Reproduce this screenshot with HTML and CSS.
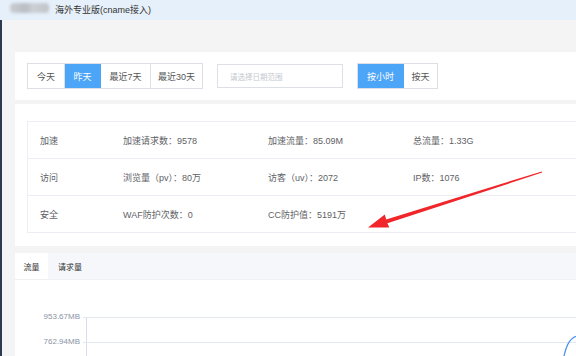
FILE: index.html
```html
<!DOCTYPE html>
<html lang="zh">
<head>
<meta charset="utf-8">
<link rel="stylesheet" href="styles.css">
</head>
<body>
<div class="topbar">
  <span class="blur"></span>
  <span class="title">海外专业版(cname接入)</span>
</div>
<div class="main">
  <div class="edge"></div>
  <div class="content">
    <div class="card filters">
      <div class="btn-group">
        <span class="btn w36">今天</span>
        <span class="btn w36 active">昨天</span>
        <span class="btn w50">最近7天</span>
        <span class="btn w52">最近30天</span>
      </div>
      <div class="date-input">请选择日期范围</div>
      <div class="btn-group">
        <span class="btn w45 active">按小时</span>
        <span class="btn w34">按天</span>
      </div>
    </div>

    <div class="card stats">
      <div class="table">
        <div class="row">
          <span class="cell label">加速</span>
          <span class="cell">加速请求数：9578</span>
          <span class="cell">加速流量：85.09M</span>
          <span class="cell">总流量：1.33G</span>
        </div>
        <div class="row">
          <span class="cell label">访问</span>
          <span class="cell">浏览量（pv）：80万</span>
          <span class="cell">访客（uv）：2072</span>
          <span class="cell">IP数：1076</span>
        </div>
        <div class="row">
          <span class="cell label">安全</span>
          <span class="cell">WAF防护次数：0</span>
          <span class="cell">CC防护值：5191万</span>
          <span class="cell"></span>
        </div>
      </div>
    </div>

    <div class="card chart-card">
      <div class="tabs">
        <span class="tab active">流量</span>
        <span class="tab">请求量</span>
      </div>
      <div class="chart">
        <div class="yrow">
          <span class="ylabel">953.67MB</span>
          <div class="yline"><div class="yplot"></div></div>
        </div>
        <div class="yrow">
          <span class="ylabel">762.94MB</span>
          <div class="yline"><div class="yplot"></div></div>
        </div>
        <svg class="curve" width="14" height="23" viewBox="0 0 14 23">
          <path d="M0.5 23 C 3 12, 6 3, 14 1" fill="none" stroke="#4a8ef0" stroke-width="1.2"/>
        </svg>
      </div>
    </div>
  </div>
</div>
<svg class="arrow" width="576" height="356" viewBox="0 0 576 356">
  <polygon points="542.2,172.6 387.4,223.2 389.3,227.6 368,227.5 384.8,214.6 386.2,219.4 541.8,171.4" fill="#f0262a"/>
</svg>
</body>
</html>
```

FILE: styles.css
```css
html, body {
  margin: 0;
  padding: 0;
}
body {
  width: 576px;
  height: 356px;
  overflow: hidden;
  background: #f4f4f4;
  font-family: "Liberation Sans", "Noto Sans CJK SC", sans-serif;
  font-size: 9px;
  color: #606266;
  position: relative;
}
.topbar {
  height: 20px;
  background: #e6f0fa;
  display: flex;
  align-items: center;
  position: relative;
}
.blur {
  position: absolute;
  left: 10px;
  top: 3px;
  width: 39px;
  height: 10px;
  border-radius: 4px;
  background: linear-gradient(90deg, #c9cdd2 0%, #b9bec4 40%, #cdd1d6 60%, #bfc4c9 100%);
  filter: blur(1.4px);
}
.title {
  margin-left: 55px;
  font-size: 9px;
  color: #333;
  line-height: 20px;
}
.main {
  display: flex;
  height: 336px;
  overflow: hidden;
}
.edge {
  width: 2px;
  background: #2d3b50;
  flex: none;
}
.content {
  width: 561px;
  flex: none;
  padding: 32px 0 0 13px;
  overflow: hidden;
}
.card {
  background: #fff;
}
.filters {
  height: 48px;
  box-sizing: border-box;
  padding: 11px 12px;
  display: flex;
  align-items: center;
}
.btn-group {
  display: flex;
  border: 1px solid #dcdfe6;
  height: 26px;
  box-sizing: border-box;
}
.btn {
  display: flex;
  align-items: center;
  justify-content: center;
  font-size: 9px;
  color: #555;
  box-sizing: border-box;
}
.btn + .btn {
  border-left: 1px solid #dcdfe6;
}
.btn.active {
  background: #4da5f7;
  color: #fff;
}
.btn.active + .btn {
  border-left-color: #4da5f7;
}
.w36 { width: 36px; }
.w50 { width: 50px; }
.w52 { width: 52px; }
.w45 { width: 45px; }
.w34 { width: 34px; }
.date-input {
  margin: 0 14px;
  width: 126px;
  height: 24px;
  box-sizing: border-box;
  border: 1px solid #dcdfe6;
  padding-left: 12px;
  display: flex;
  align-items: center;
  font-size: 7.5px;
  color: #c4c8cf;
}
.stats {
  margin-top: 4px;
  padding: 17px 0 13px 12px;
}
.table {
  border: 1px solid #ebeef5;
  border-right: none;
}
.row {
  display: grid;
  grid-template-columns: 95px 145px 145px 1fr;
  height: 36px;
  align-items: center;
}
.row + .row {
  border-top: 1px solid #ebeef5;
}
.cell.label {
  padding-left: 12px;
}
.chart-card {
  margin-top: 7px;
  height: 103px;
  overflow: hidden;
}
.tabs {
  display: flex;
  height: 27px;
  background: #f5f7fa;
  border-bottom: 1px solid #eef0f4;
  box-sizing: border-box;
}
.tab {
  display: flex;
  align-items: center;
  padding: 0 10px;
  font-size: 8px;
  color: #333;
  white-space: nowrap;
}
.tab.active {
  background: #fff;
  width: 33px;
  box-sizing: border-box;
  padding: 0;
  justify-content: center;
}
.chart {
  position: relative;
  padding-top: 37px;
}
.yrow {
  display: flex;
  height: 25px;
}
.ylabel {
  width: 65px;
  text-align: right;
  font-size: 8px;
  color: #8a94a6;
  line-height: 10px;
  margin-top: -5px;
  flex: none;
}
.yline {
  flex: 1;
  margin-left: 3px;
  border-top: 1px solid #e3e7ef;
}
.yplot {
  margin-left: 3px;
  height: 25px;
  border-left: 1px solid #d7dce5;
}
.curve {
  position: absolute;
  left: 548px;
  top: 55px;
}
.arrow {
  position: absolute;
  left: 0;
  top: 0;
  pointer-events: none;
}
```
